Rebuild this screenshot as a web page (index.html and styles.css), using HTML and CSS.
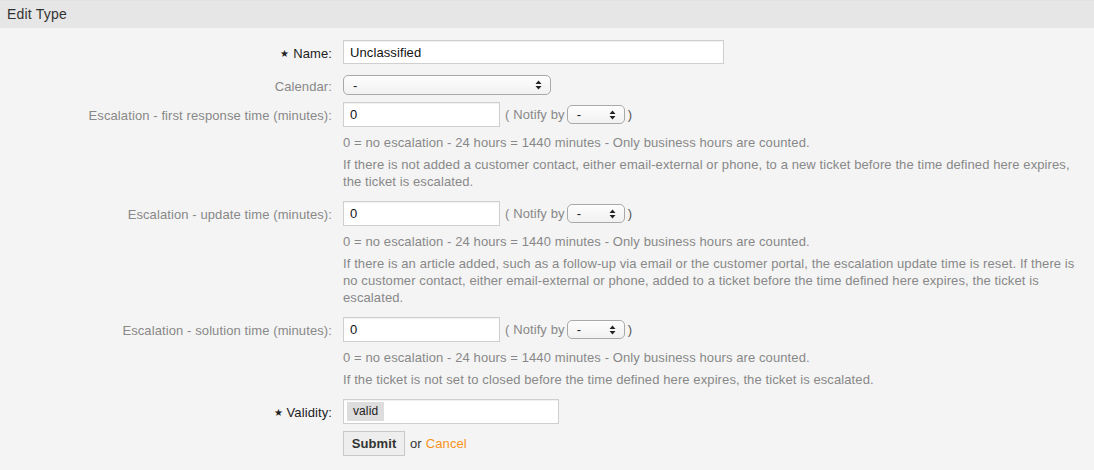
FILE: index.html
```html
<!DOCTYPE html>
<html>
<head>
<meta charset="utf-8">
<link rel="stylesheet" href="styles.css">
</head>
<body>
<div class="header">Edit Type</div>
<form class="form">
  <div class="field row-name">
    <label class="label label-strong"><span class="star">&#9733;</span> Name:</label>
    <div class="control"><div class="input input-name">Unclassified</div></div>
  </div>
  <div class="field row-calendar">
    <label class="label">Calendar:</label>
    <div class="control">
      <div class="select select-calendar"><span>-</span>
        <svg class="arrows" width="7" height="10" viewBox="0 0 7 10"><path d="M3.5 0.5 L6.5 4 L0.5 4 Z M3.5 9.5 L6.5 6 L0.5 6 Z" fill="#222"/></svg>
      </div>
    </div>
  </div>

  <div class="field">
    <label class="label">Escalation - first response time (minutes):</label>
    <div class="control">
      <div class="input input-small">0</div>
      <span class="notify">( Notify by</span>
      <div class="select select-notify"><span>-</span>
        <svg class="arrows" width="7" height="10" viewBox="0 0 7 10"><path d="M3.5 0.5 L6.5 4 L0.5 4 Z M3.5 9.5 L6.5 6 L0.5 6 Z" fill="#222"/></svg>
      </div>
      <span class="paren">)</span>
    </div>
  </div>
  <div class="help">
    <p>0 = no escalation - 24 hours = 1440 minutes - Only business hours are counted.</p>
    <p>If there is not added a customer contact, either email-external or phone, to a new ticket before the time defined here expires, the ticket is escalated.</p>
  </div>

  <div class="field field-gap">
    <label class="label">Escalation - update time (minutes):</label>
    <div class="control">
      <div class="input input-small">0</div>
      <span class="notify">( Notify by</span>
      <div class="select select-notify"><span>-</span>
        <svg class="arrows" width="7" height="10" viewBox="0 0 7 10"><path d="M3.5 0.5 L6.5 4 L0.5 4 Z M3.5 9.5 L6.5 6 L0.5 6 Z" fill="#222"/></svg>
      </div>
      <span class="paren">)</span>
    </div>
  </div>
  <div class="help">
    <p>0 = no escalation - 24 hours = 1440 minutes - Only business hours are counted.</p>
    <p>If there is an article added, such as a follow-up via email or the customer portal, the escalation update time is reset. If there is no customer contact, either email-external or phone, added to a ticket before the time defined here expires, the ticket is escalated.</p>
  </div>

  <div class="field field-gap">
    <label class="label">Escalation - solution time (minutes):</label>
    <div class="control">
      <div class="input input-small">0</div>
      <span class="notify">( Notify by</span>
      <div class="select select-notify"><span>-</span>
        <svg class="arrows" width="7" height="10" viewBox="0 0 7 10"><path d="M3.5 0.5 L6.5 4 L0.5 4 Z M3.5 9.5 L6.5 6 L0.5 6 Z" fill="#222"/></svg>
      </div>
      <span class="paren">)</span>
    </div>
  </div>
  <div class="help">
    <p>0 = no escalation - 24 hours = 1440 minutes - Only business hours are counted.</p>
    <p>If the ticket is not set to closed before the time defined here expires, the ticket is escalated.</p>
  </div>

  <div class="field field-gap">
    <label class="label label-strong"><span class="star">&#9733;</span> Validity:</label>
    <div class="control"><div class="input input-validity"><span class="tag">valid</span></div></div>
  </div>
  <div class="field row-submit">
    <span></span>
    <div class="control">
      <button type="button" class="button">Submit</button>
      <span class="or">or</span>
      <a class="cancel">Cancel</a>
    </div>
  </div>
</form>
</body>
</html>
```

FILE: styles.css
```css
html, body {
  margin: 0;
  padding: 0;
  background: #f4f4f4;
  font-family: "Liberation Sans", Arial, sans-serif;
  font-size: 13px;
  letter-spacing: 0.1px;
  color: #333;
}

.header {
  height: 27px;
  line-height: 27px;
  border-top: 1px solid #e2e2e2;
  background: #e6e6e6;
  padding-left: 7px;
  font-size: 14px;
  letter-spacing: 0.2px;
  color: #333;
}

.form {
  padding-top: 12px;
  width: 1082px;
}

.field {
  display: grid;
  grid-template-columns: 332px 1fr;
  column-gap: 11px;
  align-items: center;
}

.row-name { margin-bottom: 11px; }
.row-calendar { margin-bottom: 7px; }
.field-gap { margin-top: 11px; }
.row-submit { margin-top: 7px; }

.label {
  text-align: right;
  color: #888;
  font-size: 13px;
  position: relative;
  top: 1px;
}

.label-strong { color: #222; }

.star {
  font-size: 10px;
  position: relative;
  top: -1px;
}

.control {
  display: flex;
  align-items: center;
}

.input {
  box-sizing: border-box;
  height: 25px;
  background: #fff;
  border: 1px solid #cfcfcf;
  box-shadow: inset 0 1px 1px rgba(0,0,0,0.06);
  padding: 0 6px;
  display: flex;
  align-items: center;
  font-size: 13px;
  color: #111;
}

.input-name { width: 381px; height: 24px; }
.input-small { width: 157px; }
.input-validity { width: 216px; padding: 0 3px; }

.tag {
  background: #ddd;
  padding: 3px 6px 3px;
  line-height: 13px;
  font-size: 12px;
  color: #222;
}

.select {
  box-sizing: border-box;
  height: 20px;
  border: 1px solid #a9a9a9;
  border-radius: 5px;
  background: linear-gradient(#fdfdfd, #f1f1f1);
  display: flex;
  align-items: center;
  justify-content: space-between;
  padding: 0 8px 0 9px;
  font-size: 13px;
  color: #222;
}

.select-calendar { width: 208px; }
.select-notify { width: 58px; height: 19px; }

.notify {
  color: #888;
  margin-left: 5px;
  margin-right: 2px;
}

.paren {
  color: #555;
  margin-left: 3px;
}

.help {
  margin-left: 343px;
  margin-top: 7px;
  color: #888;
  font-size: 13px;
  line-height: 17px;
}

.help p {
  margin: 0 0 5px 0;
}

.help p:last-child { margin-bottom: 0; }

.button {
  box-sizing: border-box;
  height: 25px;
  width: 62px;
  border: 1px solid #c8c8c8;
  background: #eee;
  font-family: "Liberation Sans", Arial, sans-serif;
  font-weight: bold;
  font-size: 13px;
  letter-spacing: 0.1px;
  color: #333;
  padding: 0;
}

.or {
  margin-left: 5px;
  color: #333;
}

.cancel {
  margin-left: 4px;
  color: #f7931e;
}
```
